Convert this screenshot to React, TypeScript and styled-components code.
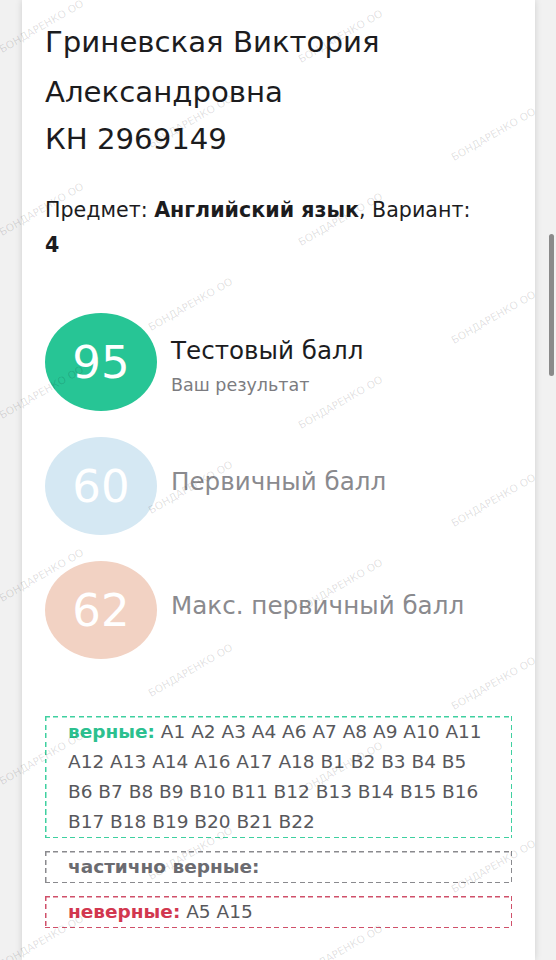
import React from "react";
import styled, { createGlobalStyle } from "styled-components";

const GlobalStyle = createGlobalStyle`
  html, body {
    margin: 0;
    padding: 0;
    background: #f1f1f1;
  }
  body {
    font-family: "DejaVu Sans", Inter, "Liberation Sans", sans-serif;
    -webkit-font-smoothing: antialiased;
  }
`;

const Page = styled.div`
  position: relative;
  min-height: 960px;
  overflow: hidden;
`;

const Card = styled.div`
  margin: 0 21px 0 22px;
  min-height: 960px;
  background: #fff;
  box-shadow: 0 0 7px rgba(0, 0, 0, 0.14);
  padding: 17px 23px 0;
  box-sizing: border-box;
  color: #1c1c1e;
`;

const Name = styled.div`
  font-size: 29.2px;
  line-height: 50px;
`;

const Code = styled.div`
  font-size: 29.2px;
  line-height: 44px;
`;

const Subject = styled.div`
  margin-top: 32px;
  font-size: 20.6px;
  line-height: 35px;

  b {
    font-weight: 700;
  }
`;

const Variant = styled.b`
  display: block;
`;

const Scores = styled.div`
  margin-top: 50px;
  display: flex;
  flex-direction: column;
  gap: 26px;
`;

const ScoreRow = styled.div`
  display: flex;
  align-items: center;
  gap: 14px;
`;

const Circle = styled.div<{ $bg: string }>`
  flex: none;
  width: 112px;
  height: 98px;
  border-radius: 50%;
  background: ${(p) => p.$bg};
  color: #fff;
  display: flex;
  align-items: center;
  justify-content: center;
  font-size: 45px;
`;

// positive shift moves the caption block down, negative moves it up
const Labels = styled.div<{ $shift: number }>`
  display: flex;
  flex-direction: column;
  position: relative;
  top: ${(p) => p.$shift}px;
`;

const ScoreTitle = styled.div<{ $muted?: boolean }>`
  font-size: 24.6px;
  line-height: 30px;
  color: ${(p) => (p.$muted ? "#8a8a8e" : "#1c1c1e")};
`;

const ScoreHint = styled.div`
  margin-top: 7px;
  font-size: 17.5px;
  line-height: 24px;
  color: #7c7c80;
`;

const Answers = styled.div`
  margin-top: 57px;
  display: flex;
  flex-direction: column;
  gap: 13px;
`;

// dashed frame drawn with gradients so the dashes come out longer than the browser's own
const dash = (c: string, dir: string) =>
  `repeating-linear-gradient(${dir}, ${c} 0 5px, transparent 5px 8.5px)`;

const AnswerBox = styled.div<{ $tone: string }>`
  padding: 1px 23px;
  font-size: 18.5px;
  line-height: 30px;
  color: #58585c;
  background:
    ${(p) => dash(p.$tone, "90deg")} top left / 100% 1.5px no-repeat,
    ${(p) => dash(p.$tone, "90deg")} bottom left / 100% 1.5px no-repeat,
    ${(p) => dash(p.$tone, "180deg")} top left / 1.5px 100% no-repeat,
    ${(p) => dash(p.$tone, "180deg")} top right / 1.5px 100% no-repeat;
`;

const AnswerLabel = styled.span<{ $tone: string }>`
  font-weight: 700;
  color: ${(p) => p.$tone};
`;

const Watermark = styled.span`
  position: absolute;
  font-size: 10.5px;
  line-height: 12px;
  white-space: nowrap;
  color: rgba(0, 0, 0, 0.13);
  transform: rotate(-30deg);
  transform-origin: 0 100%;
  pointer-events: none;
`;

const Scrollbar = styled.div`
  position: absolute;
  left: 549px;
  top: 234px;
  width: 5px;
  height: 142px;
  border-radius: 3px;
  background: #8a8a8a;
`;

const scores = [
  { value: 95, bg: "#27c595", title: "Тестовый балл", hint: "Ваш результат" },
  { value: 60, bg: "#d5e8f3", title: "Первичный балл", muted: true },
  { value: 62, bg: "#f2d2c3", title: "Макс. первичный балл", muted: true },
];

const correct =
  "A1 A2 A3 A4 A6 A7 A8 A9 A10 A11 A12 A13 A14 A16 A17 A18 B1 B2 B3 B4 B5 B6 B7 B8 B9 B10 B11 B12 B13 B14 B15 B16 B17 B18 B19 B20 B21 B22";

// stamp grid: two stamps per 183px row, staggered
const stamps: { x: number; y: number }[] = [];
for (let r = -1; r < 6; r++) {
  stamps.push({ x: 3, y: 55 + r * 183 });
  stamps.push({ x: 302, y: 65 + r * 183 });
  stamps.push({ x: 152, y: 150 + r * 183 });
  stamps.push({ x: 455, y: 163 + r * 183 });
}

export default function App() {
  return (
    <Page>
      <GlobalStyle />
      <Card>
        <Name>
          Гриневская Виктория
          <br />
          Александровна
        </Name>
        <Code>КН 2969149</Code>
        <Subject>
          Предмет: <b>Английский язык</b>, Вариант:
          <Variant>4</Variant>
        </Subject>

        <Scores>
          {scores.map((s) => (
            <ScoreRow key={s.title}>
              <Circle $bg={s.bg}>{s.value}</Circle>
              <Labels $shift={s.hint ? 4 : -4}>
                <ScoreTitle $muted={s.muted}>{s.title}</ScoreTitle>
                {s.hint && <ScoreHint>{s.hint}</ScoreHint>}
              </Labels>
            </ScoreRow>
          ))}
        </Scores>

        <Answers>
          <AnswerBox $tone="#3fd0a0">
            <AnswerLabel $tone="#2cc08f">верные:</AnswerLabel> {correct}
          </AnswerBox>
          <AnswerBox $tone="#8a8a8e">
            <AnswerLabel $tone="#6b6b70">частично верные:</AnswerLabel>
          </AnswerBox>
          <AnswerBox $tone="#d0506a">
            <AnswerLabel $tone="#d2374f">неверные:</AnswerLabel> A5 A15
          </AnswerBox>
        </Answers>
      </Card>

      {stamps.map((p, i) => (
        <Watermark key={i} style={{ left: p.x, top: p.y - 12 }}>
          БОНДАРЕНКО ОО
        </Watermark>
      ))}
      <Scrollbar />
    </Page>
  );
}
